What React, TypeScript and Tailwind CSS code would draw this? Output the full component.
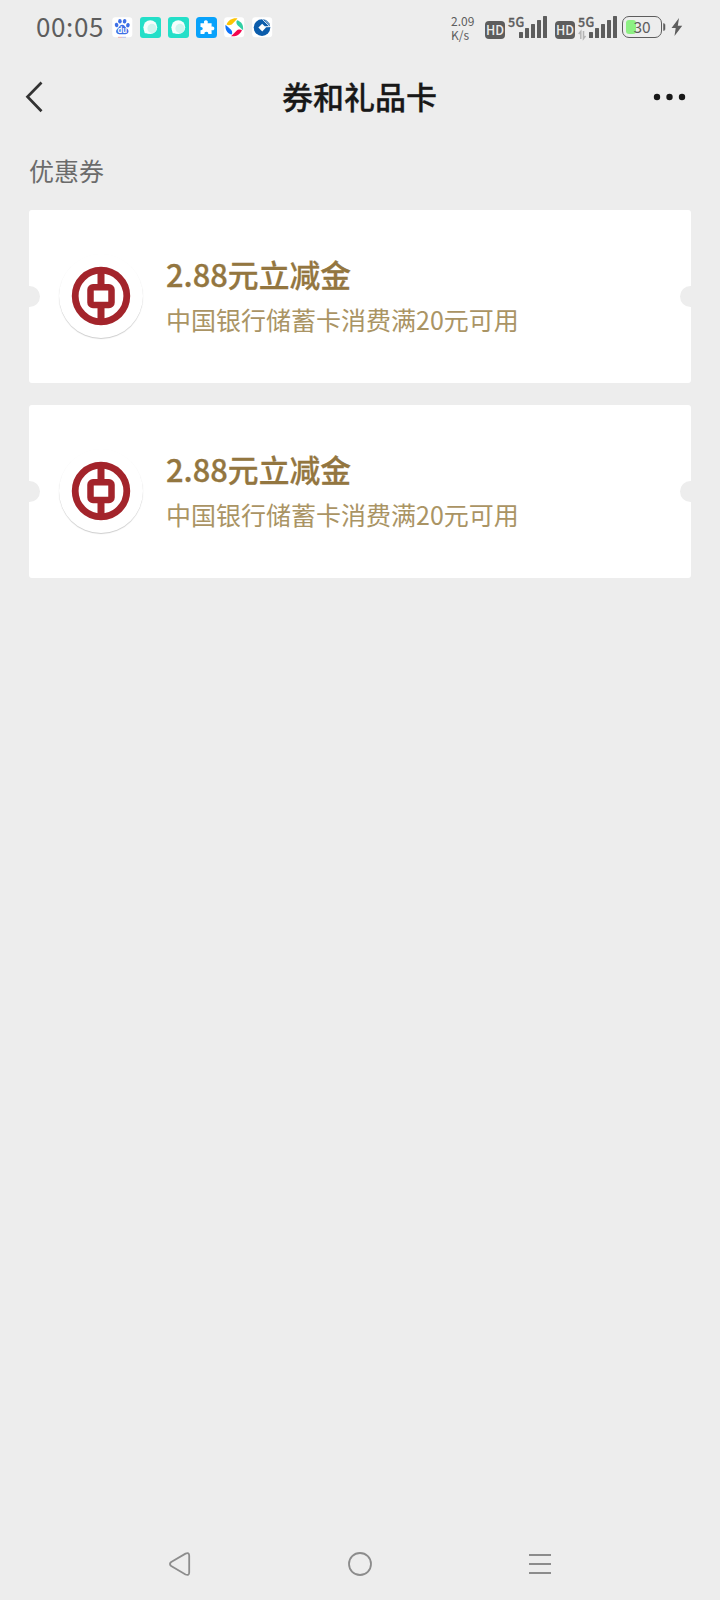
import React from 'react';

const coupons = [
  { id: 1, title: '2.88元立减金', desc: '中国银行储蓄卡消费满20元可用' },
  { id: 2, title: '2.88元立减金', desc: '中国银行储蓄卡消费满20元可用' },
];

const BubbleIcon: React.FC = () => (
  <svg className="w-[21px] h-[21px]" viewBox="0 0 21 21">
    <rect width="21" height="21" rx="3" fill="#23dfc8" />
    <circle cx="10.3" cy="10.2" r="6.9" fill="#f4fefc" />
    <path d="M3.6 11.5l1 4.2q.2.6.9.6l4.5.5z" fill="#f4fefc" />
    <circle cx="12" cy="11.4" r="4.6" fill="#cff4ee" />
  </svg>
);

const AppIcons: React.FC = () => (
  <div className="flex items-center gap-[7px]">
    <svg className="w-[21px] h-[21px]" viewBox="0 0 21 21">
      <rect x="0.3" y="0.3" width="20" height="20" rx="3" fill="#fff" />
      <g fill="#3d6fe6">
        <ellipse cx="4.6" cy="8" rx="1.8" ry="2.2" transform="rotate(-15 4.6 8)" />
        <ellipse cx="7.9" cy="4.3" rx="1.8" ry="2.3" />
        <ellipse cx="12.6" cy="4.3" rx="1.8" ry="2.3" transform="rotate(10 12.6 4.3)" />
        <ellipse cx="15.9" cy="8.2" rx="1.8" ry="2.2" transform="rotate(15 15.9 8.2)" />
        <path d="M10.2 7.8c1.8 0 2.4 1.4 3.6 2.6 1.6 1.2 2.9 2.3 2.7 4.2-.2 1.9-1.8 2.8-3.5 2.7-1.8-.1-3.6-.1-5.4 0-1.7.1-3.3-.9-3.5-2.7-.1-1.8 1.1-2.9 2.5-4.2 1.2-1.2 1.8-2.6 3.6-2.6z" />
      </g>
      <text x="10.2" y="16" textAnchor="middle" fill="#fff" className="text-[7.5px] font-bold">
        du
      </text>
      <path d="M6 20.3h4" stroke="#e9a5a5" strokeWidth="0.8" />
      <path d="M10 20.3h4" stroke="#a9b8ec" strokeWidth="0.8" />
    </svg>
    <BubbleIcon />
    <BubbleIcon />
    <svg className="w-[21px] h-[21px]" viewBox="0 0 21 21">
      <rect width="21" height="21" rx="3.5" fill="#08a2fb" />
      <path
        d="M4.5 6.3h3.7C7.4 4.4 8.5 3.2 9.9 3.2s2.5 1.2 1.7 3.1h4v3.4c1.7-.5 2.7.4 2.7 1.7s-1 2.2-2.7 1.6v4h-3.4c.3-1.5-.6-2.3-1.8-2.3s-2.2.8-1.9 2.3h-4v-3.7c1.5.2 2.2-.7 2.2-1.7s-.7-1.9-2.2-1.6z"
        fill="#fff"
      />
    </svg>
    <svg className="w-[21px] h-[21px]" viewBox="0 0 21 21">
      <rect x="0.2" y="0.3" width="20" height="20" rx="3" fill="#fff" />
      <path d="M2.5 7.5C4.5 3 8.5 .8 13.5 1.4L8.5 6.7C7 8.3 4.7 8.6 2.5 7.5z" fill="#fcc403" />
      <path d="M13 3.3c4.5 1.3 6.6 4.8 6.1 9.9l-5.3-4.7C12.2 7 12 5 13 3.3z" fill="#31cfa4" />
      <path d="M18 13.1c-1.9 4.6-5.7 6.7-10.9 6.2l5.2-5.4c1.6-1.6 3.7-1.8 5.7-.8z" fill="#f3054f" />
      <path d="M7.6 17.6C3.1 16.3 1 12.8 1.5 7.7l5.3 4.7c1.6 1.5 1.8 3.5.8 5.2z" fill="#0d73fa" />
    </svg>
    <svg className="w-[21px] h-[21px]" viewBox="0 0 21 21">
      <rect x="0.2" y="0.3" width="20" height="20" rx="3" fill="#fff" />
      <circle cx="10" cy="10.6" r="8.3" fill="#0b5cab" />
      <path d="M10.2 6.8l3.8 3.8-3.8 3.8-3.8-3.8z" fill="#fff" />
      <path d="M10.5 2.4l6.5 6.5" stroke="#fff" strokeWidth="0.9" />
      <path d="M13 9.8l5.8-.2" stroke="#fff" strokeWidth="1" />
      <path d="M13.3 3.2l4.2 4.2" stroke="#6f9dca" strokeWidth="1.5" />
    </svg>
  </div>
);

const Signal: React.FC<{ traffic?: boolean }> = ({ traffic }) => (
  <div className="flex">
    <div className="mt-[21px] w-5 h-[18px] rounded-[4px] bg-[#5d5d5d] text-[#ededed] text-[12.5px] leading-[17px] font-medium text-center">
      HD
    </div>
    <div className="relative ml-[3px] w-[39px] h-[54px]">
      <span className="absolute left-0 top-[14px] text-[12.5px] leading-[15px] font-medium tracking-[0.4px] [-webkit-text-stroke:0.3px]">
        5G
      </span>
      <svg className="w-[39px] h-[54px]" viewBox="0 0 39 54" fill="#5d5d5d">
        <rect x="11" y="32" width="4" height="6" rx="0.5" />
        <rect x="17" y="28" width="4" height="10" rx="0.5" />
        <rect x="23" y="24" width="4" height="14" rx="0.5" />
        <rect x="29" y="20" width="4" height="18" rx="0.5" />
        <rect x="35" y="16" width="4" height="22" rx="0.5" />
        {traffic && (
          <path d="M0.8 34l2-2.5V39M5.5 31v7.5l2-2.5" fill="none" stroke="#b5b5b5" strokeWidth="1.5" />
        )}
      </svg>
    </div>
  </div>
);

const StatusBar: React.FC = () => (
  <div className="flex h-[54px] pl-9 pr-[37px] text-[#5d5d5d]">
    <div className="w-[75.5px] text-[26px] leading-[52px] tracking-[0.6px] whitespace-nowrap">00:05</div>
    <AppIcons />
    <div className="ml-auto mt-[14px] w-[34px] text-[12px] leading-[14px]">
      <div>2.09</div>
      <div>K/s</div>
    </div>
    <Signal />
    <div className="w-2" />
    <Signal traffic />
    <div className="ml-[5px] mt-4 relative w-10 h-[22px] rounded-[7px] border-[1.5px] border-[#5d5d5d]">
      <div className="mt-[3px] ml-[3px] w-[10px] h-[14px] rounded-[3px] bg-[#8df083]" />
      <div className="absolute inset-0 text-center text-[15.5px] leading-[19px]">30</div>
    </div>
    <svg className="w-[21px] h-[54px]" viewBox="0 0 21 54">
      <path d="M1.5 23.5q1.5 0 1.5 1.5v4q0 1.5-1.5 1.5z" fill="#5d5d5d" stroke="#5d5d5d" strokeWidth="0.5" />
      <path d="M17 18l-7.5 10h4.2L12.5 36l7.7-10.3h-4.4z" fill="#5d5d5d" />
    </svg>
  </div>
);

const BankLogo: React.FC = () => (
  <div className="mb-[2px] w-[84px] h-[84px] rounded-full bg-white shadow-[0_1px_1px_rgba(0,0,0,0.2)]">
    <svg className="w-[84px] h-[84px]" viewBox="0 0 84 84" fill="none" stroke="#a3242b">
      <circle cx="42" cy="42" r="25.8" strokeWidth="6.8" />
      <rect x="31.5" y="33.3" width="21" height="17.6" rx="2.5" strokeWidth="6.5" />
      <path d="M42 16v17M42 51v17" strokeWidth="7" />
    </svg>
  </div>
);

const CouponCard: React.FC<{ title: string; desc: string }> = ({ title, desc }) => (
  <div className="relative flex items-center h-[173px] pl-[30px] rounded-[3px] bg-white overflow-hidden">
    <BankLogo />
    <div className="ml-[23px]">
      <div className="text-[30.8px] leading-[44px] font-medium text-[#937640] [-webkit-text-stroke:0.3px]">{title}</div>
      <div className="pt-px text-[25px] leading-[45px] text-[#aa9464]">{desc}</div>
    </div>
    {/* Ticket notches */}
    <div className="absolute left-[-10px] top-[76px] w-[21px] h-[21px] rounded-full bg-[#ededed]" />
    <div className="absolute right-[-10px] top-[76px] w-[21px] h-[21px] rounded-full bg-[#ededed]" />
  </div>
);

export default function App() {
  return (
    <div className="flex flex-col w-[720px] h-[1600px] overflow-hidden bg-[#ededed] font-['Noto_Sans_CJK_SC',sans-serif]">
      <StatusBar />

      <header className="flex items-center justify-between h-[86px] pl-[25px] pr-[33px] text-[#181818]">
        <svg className="w-[41px] h-8" viewBox="0 0 41 32">
          <path d="M16.5 1.5L2.5 15.8l14 14.5" fill="none" stroke="#333" strokeWidth="2.7" />
        </svg>
        <h1 className="pb-[2px] text-[31px] leading-[44px] font-medium [-webkit-text-stroke:0.3px]">券和礼品卡</h1>
        <svg className="w-[34px] h-2" viewBox="0 0 34 8" fill="#181818">
          <circle cx="4" cy="4" r="3.2" />
          <circle cx="16.5" cy="4" r="3.2" />
          <circle cx="29" cy="4" r="3.2" />
        </svg>
      </header>

      <main className="flex-1 px-[29px]">
        <h2 className="h-[70px] text-[25px] leading-[60px] text-[#6b6b6b]">优惠券</h2>
        <div className="flex flex-col gap-[22px]">
          {coupons.map((item) => (
            <CouponCard key={item.id} title={item.title} desc={item.desc} />
          ))}
        </div>
      </main>

      {/* Android navigation */}
      <nav className="flex items-center justify-around h-[72px] px-[90px]">
        <svg className="w-6 h-6" viewBox="0 0 24 24" fill="none" stroke="#8c8c8c" strokeWidth="1.8">
          <path d="M3.2 10L17.5 1.6q3.7-1.5 3.7 2v17q0 3.3-3.7 1.9L3.2 14q-2.5-2 0-4z" />
        </svg>
        <svg className="w-6 h-6" viewBox="0 0 24 24" fill="none" stroke="#8c8c8c" strokeWidth="1.8">
          <circle cx="12" cy="12" r="11" />
        </svg>
        <svg className="w-6 h-6" viewBox="0 0 24 24" fill="none" stroke="#8c8c8c" strokeWidth="2">
          <path d="M1 3h22M1 12h22M1 21h22" />
        </svg>
      </nav>
    </div>
  );
}
